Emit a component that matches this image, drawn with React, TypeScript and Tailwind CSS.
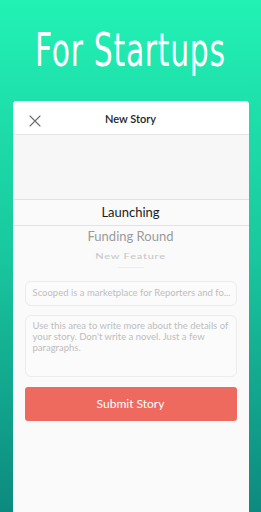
import React from "react";

const CloseIcon = () => (
  <svg width="12" height="12" viewBox="0 0 12 12" fill="none">
    <path d="M1 1L11 11M11 1L1 11" stroke="#6b6b6b" strokeWidth="1.1" strokeLinecap="round" />
  </svg>
);

const App = () => {
  return (
    <div className="h-[512px] w-full overflow-hidden bg-gradient-to-b from-[#22f2b4] via-[#19c79e] to-[#0d8a7f] flex flex-col items-center font-['Lato',sans-serif]">
      {/* Headline */}
      <div className="h-[101px] w-full flex items-center justify-center pb-[2px]">
        <h1 className="whitespace-nowrap text-white text-[46px] leading-none tracking-[1px] font-['DejaVu_Sans_Condensed','DejaVu_Sans',sans-serif] scale-x-[0.72]">
          For Startups
        </h1>
      </div>

      {/* Card */}
      <div className="w-[236px] flex-1 bg-[#fafafa] rounded-t-[4px] overflow-hidden flex flex-col">
        <div className="h-[34px] bg-white border-b border-[#e6e6e6] flex items-center relative">
          <div className="absolute left-[16px] top-[14px]">
            <CloseIcon />
          </div>
          <div className="flex-1 text-center text-[11px] font-semibold text-[#222] pt-[4px]">New Story</div>
        </div>

        {/* Picker */}
        <div className="h-[64px] bg-[#f7f7f7]" />
        <div className="h-[27px] bg-[#fafafa] border-y border-[#e2e2e2] flex items-center justify-center text-[13px] text-[#1c1c1c]">
          Launching
        </div>
        <div className="h-[22px] flex items-center justify-center text-[13px] text-[#9a9a9a]">Funding Round</div>
        <div className="h-[16px] flex items-center justify-center text-[11px] text-[#c6c6c6] scale-y-[0.75] tracking-[0.8px]">
          New Feature
        </div>
        <div className="h-[6px] flex items-center justify-center">
          <div className="w-[26px] h-[1px] bg-[#ececec]" />
        </div>

        {/* Form */}
        <div className="px-[12px] pt-[11px] flex flex-col">
          <div className="h-[25px] rounded-[6px] border border-[#ececec] bg-[#fbfbfb] px-[7px] flex items-center text-[9.5px] text-[#bdbdbd] whitespace-nowrap overflow-hidden">
            Scooped is a marketplace for Reporters and fo...
          </div>
          <div className="mt-[9px] h-[62px] rounded-[6px] border border-[#ececec] bg-[#fbfbfb] px-[7px] pt-[4px] text-[9.5px] leading-[11px] text-[#bdbdbd]">
            Use this area to write more about the details of your story. Don't write a novel. Just a few paragraphs.
          </div>
          <button className="mt-[10px] h-[34px] rounded-[3px] bg-[#ef6a5e] text-white text-[12px] flex items-center justify-center">
            Submit Story
          </button>
        </div>
      </div>
    </div>
  );
};

export default App;
